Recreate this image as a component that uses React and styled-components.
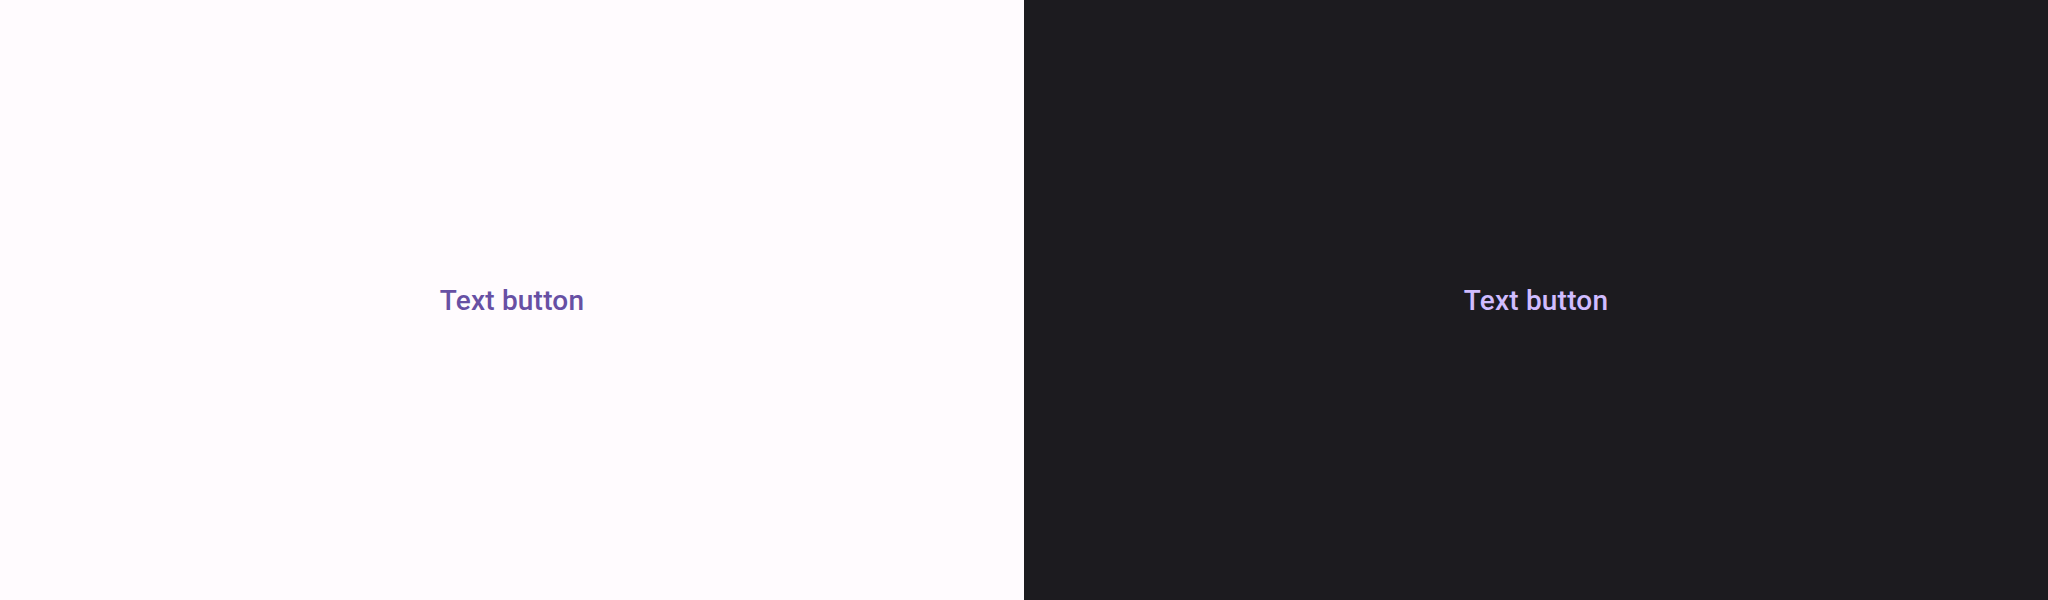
import styled, { createGlobalStyle } from "styled-components";

const GlobalStyle = createGlobalStyle`
  html, body {
    margin: 0;
    padding: 0;
  }
  body {
    font-family: Roboto, "Noto Sans", sans-serif;
  }
`;

const themes = {
  light: { surface: "#FFFBFE", primary: "#6750A4" },
  dark: { surface: "#1C1B1F", primary: "#D0BCFF" },
};

const Page = styled.div`
  display: grid;
  grid-template-columns: 1fr 1fr;
  width: 2048px;
  height: 600px;
`;

const Panel = styled.div`
  display: flex;
  align-items: center;
  justify-content: center;
  background: ${(p) => themes[p.$mode].surface};
`;

const TextButton = styled.button`
  height: 80px;
  padding: 0 24px;
  border: none;
  border-radius: 40px;
  background: transparent;
  color: ${(p) => themes[p.$mode].primary};
  font-family: Roboto, sans-serif;
  font-size: 28px;
  font-weight: 500;
  letter-spacing: 0.2px;
  cursor: pointer;
`;

const App = () => {
  return (
    <>
      <GlobalStyle />
      <Page>
        <Panel $mode="light">
          <TextButton $mode="light">Text button</TextButton>
        </Panel>
        <Panel $mode="dark">
          <TextButton $mode="dark">Text button</TextButton>
        </Panel>
      </Page>
    </>
  );
};

export default App;
